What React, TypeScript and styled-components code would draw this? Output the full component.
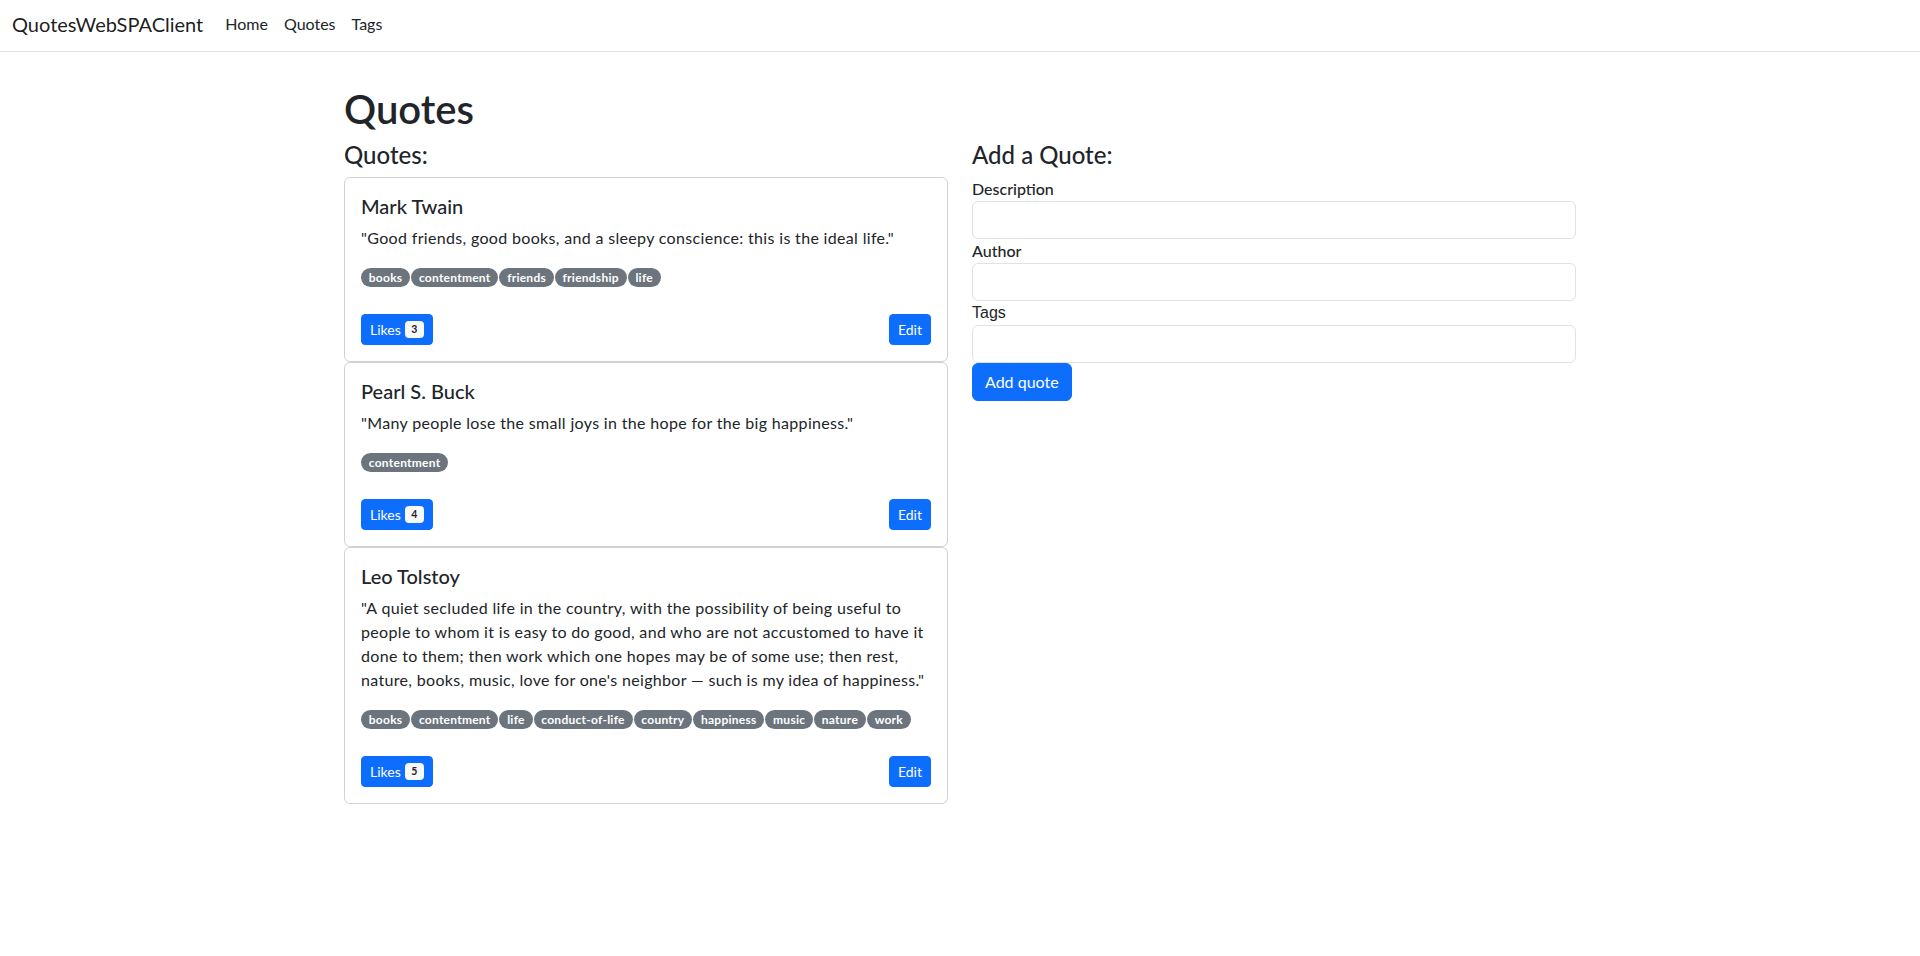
import React from "react";
import styled, { createGlobalStyle } from "styled-components";

const GlobalStyle = createGlobalStyle`
  *, *::before, *::after { box-sizing: border-box; }
  body {
    margin: 0;
    font-family: Lato, "Noto Sans", sans-serif;
    font-size: 16px;
    line-height: 1.5;
    color: #212529;
    background: #fff;
  }
`;

const NavBar = styled.nav`
  height: 52px;
  display: flex;
  align-items: center;
  padding: 0 12px 4px;
  border-bottom: 1px solid #dee2e6;
  background: #fff;
`;

const Brand = styled.a`
  font-size: 20px;
  line-height: 30px;
  color: rgba(0, 0, 0, 0.9);
  text-decoration: none;
  margin-right: 14px;
`;

const NavLink = styled.a`
  font-size: 16px;
  line-height: 24px;
  color: #212529;
  text-decoration: none;
  padding: 0 8px;
`;

const Main = styled.main`
  width: 1232px;
  margin: 0 auto;
  padding-top: 33px;
`;

const PageTitle = styled.h1`
  margin: 0 0 8px;
  font-size: 40px;
  line-height: 48px;
  font-weight: 600;
`;

const Columns = styled.div`
  display: grid;
  grid-template-columns: 1fr 1fr;
  column-gap: 24px;
  align-items: start;
`;

const Column = styled.section`
  display: flex;
  flex-direction: column;
`;

const SectionTitle = styled.h4`
  margin: 0 0 7px;
  font-size: 24px;
  line-height: 28.8px;
  font-weight: 500;
`;

const Card = styled.article`
  border: 1px solid rgba(0, 0, 0, 0.175);
  border-radius: 6px;
  padding: 16px;
  display: flex;
  flex-direction: column;
`;

const Author = styled.h5`
  margin: 0 0 8px;
  font-size: 20px;
  line-height: 24px;
  font-weight: 500;
`;

const QuoteText = styled.p`
  margin: 0 0 16px;
  font-size: 16px;
  line-height: 24px;
  letter-spacing: 0.33px;
`;

const TagRow = styled.div`
  display: flex;
  flex-wrap: wrap;
  align-items: center;
  gap: 1px;
  min-height: 24px;
  margin-bottom: 24px;
`;

const Tag = styled.span`
  display: inline-block;
  background: #6c757d;
  color: #fff;
  font-size: 12px;
  font-weight: 700;
  line-height: 1;
  letter-spacing: 0.25px;
  padding: 3.5px 7.8px;
  border-radius: 50rem;
  white-space: nowrap;
`;

const CardFooter = styled.div`
  display: flex;
  justify-content: space-between;
  align-items: center;
`;

const SmallButton = styled.button`
  font-family: inherit;
  display: inline-flex;
  align-items: center;
  gap: 4px;
  height: 31px;
  padding: 0 8px;
  font-size: 14px;
  line-height: 21px;
  color: #fff;
  background: #0d6efd;
  border: 1px solid #0d6efd;
  border-radius: 4px;
  cursor: pointer;
`;

const Count = styled.span`
  display: inline-block;
  background: #f8f9fa;
  color: #212529;
  font-size: 10.5px;
  font-weight: 700;
  line-height: 1;
  padding: 3px 6.5px;
  border-radius: 4px;
`;

const Form = styled.form`
  display: flex;
  flex-direction: column;
`;

const Label = styled.label<{ $plain?: boolean }>`
  display: block;
  font-size: 16px;
  line-height: 24px;
  font-weight: ${(p) => (p.$plain ? 400 : 500)};
  font-family: ${(p) => (p.$plain ? '"Liberation Sans", Arial, sans-serif' : 'inherit')};
`;

const Input = styled.input`
  display: block;
  width: 100%;
  height: 38px;
  padding: 6px 12px;
  font-family: inherit;
  font-size: 16px;
  color: #212529;
  background: #fff;
  border: 1px solid #dee2e6;
  border-radius: 6px;
  outline: none;
`;

const SubmitButton = styled.button`
  align-self: flex-start;
  font-family: inherit;
  height: 38px;
  padding: 0 12px;
  font-size: 16px;
  line-height: 24px;
  color: #fff;
  background: #0d6efd;
  border: 1px solid #0d6efd;
  border-radius: 6px;
  cursor: pointer;
`;

type Quote = { author: string; text: string; tags: string[]; likes: number };

const quotes: Quote[] = [
  {
    author: "Mark Twain",
    text: "\"Good friends, good books, and a sleepy conscience: this is the ideal life.\"",
    tags: ["books", "contentment", "friends", "friendship", "life"],
    likes: 3,
  },
  {
    author: "Pearl S. Buck",
    text: "\"Many people lose the small joys in the hope for the big happiness.\"",
    tags: ["contentment"],
    likes: 4,
  },
  {
    author: "Leo Tolstoy",
    text: "\"A quiet secluded life in the country, with the possibility of being useful to people to whom it is easy to do good, and who are not accustomed to have it done to them; then work which one hopes may be of some use; then rest, nature, books, music, love for one's neighbor — such is my idea of happiness.\"",
    tags: ["books", "contentment", "life", "conduct-of-life", "country", "happiness", "music", "nature", "work"],
    likes: 5,
  },
];

export default function App() {
  return (
    <>
      <GlobalStyle />
      <NavBar>
        <Brand href="#">QuotesWebSPAClient</Brand>
        <NavLink href="#">Home</NavLink>
        <NavLink href="#">Quotes</NavLink>
        <NavLink href="#">Tags</NavLink>
      </NavBar>
      <Main>
        <PageTitle>Quotes</PageTitle>
        <Columns>
          <Column>
            <SectionTitle>Quotes:</SectionTitle>
            {quotes.map((q) => (
              <Card key={q.author}>
                <Author>{q.author}</Author>
                <QuoteText>{q.text}</QuoteText>
                <TagRow>
                  {q.tags.map((t) => (
                    <Tag key={t}>{t}</Tag>
                  ))}
                </TagRow>
                <CardFooter>
                  <SmallButton type="button">
                    Likes <Count>{q.likes}</Count>
                  </SmallButton>
                  <SmallButton type="button">Edit</SmallButton>
                </CardFooter>
              </Card>
            ))}
          </Column>
          <Column>
            <SectionTitle>Add a Quote:</SectionTitle>
            <Form onSubmit={(e) => e.preventDefault()}>
              <Label htmlFor="desc">Description</Label>
              <Input id="desc" type="text" />
              <Label htmlFor="author">Author</Label>
              <Input id="author" type="text" />
              <Label htmlFor="tags" $plain>Tags</Label>
              <Input id="tags" type="text" />
              <SubmitButton type="submit">Add quote</SubmitButton>
            </Form>
          </Column>
        </Columns>
      </Main>
    </>
  );
}
